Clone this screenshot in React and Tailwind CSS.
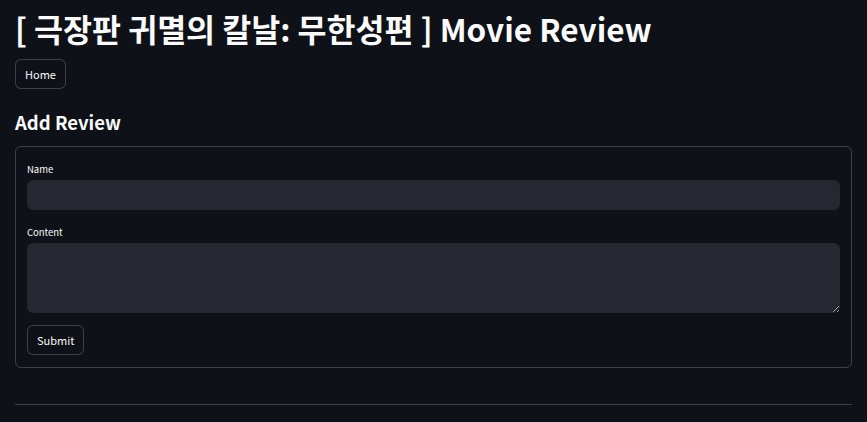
export default function App() {
  return (
    <div
      className="min-h-[422px] bg-[#0e1117] text-[#fafafa] px-[15px] pt-[6px]"
      style={{ fontFamily: '"Noto Sans CJK KR", "Noto Sans", sans-serif' }}
    >
      {/* Title */}
      <h1 className="text-[31.5px] font-bold leading-[44px]">
        [ 극장판 귀멸의 칼날: 무한성편 ] Movie Review
      </h1>

      {/* Nav */}
      <button className="mt-[9px] h-[30px] px-[9px] rounded-[6px] border border-[#fafafa]/20 bg-[#0e1117] text-[11px] leading-none">
        Home
      </button>

      {/* Form section */}
      <h3 className="mt-[20px] text-[18.5px] font-bold leading-[26px]">Add Review</h3>

      <div className="mt-[11px] border border-[#fafafa]/20 rounded-[6px] px-[11px] pt-[15px] pb-[12px]">
        <label className="block text-[9.5px] leading-[14px] mb-[4px]">Name</label>
        <input
          type="text"
          className="block w-full h-[30px] rounded-[6px] bg-[#262730] outline-none px-[8px] text-[12px]"
        />

        <label className="block mt-[15px] text-[9.5px] leading-[14px] mb-[4px]">Content</label>
        <textarea className="block w-full h-[70px] rounded-[6px] bg-[#262730] outline-none px-[8px] py-[6px] text-[12px]" />

        <button className="mt-[12px] h-[30px] px-[9px] rounded-[6px] border border-[#fafafa]/20 bg-[#0e1117] text-[11px] leading-none">
          Submit
        </button>
      </div>

      <hr className="mt-[36px] border-0 border-t border-[#fafafa]/20" />
    </div>
  );
}
